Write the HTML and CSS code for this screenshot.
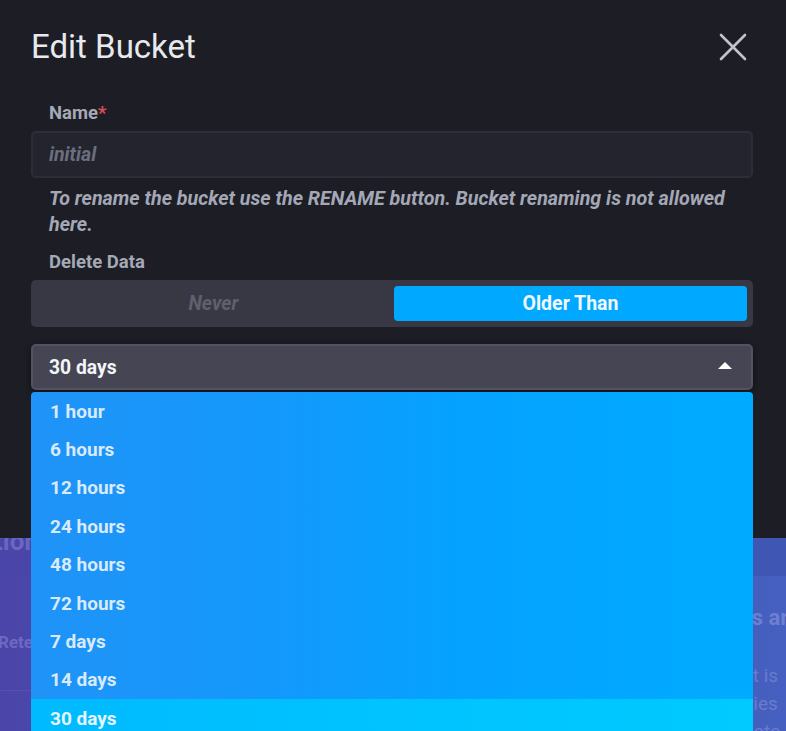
FILE: index.html
```html
<!DOCTYPE html>
<html>
<head>
<meta charset="utf-8">
<link rel="stylesheet" href="styles.css">
</head>
<body>
<div class="page">
  <div class="bg-header">
    <div class="bg-left bg-left-end"><span class="bg-title">Retention</span></div>
    <div class="bg-mid"></div>
    <div class="bg-right"></div>
  </div>
  <div class="bg-body">
    <div class="bg-left">
      <div class="bg-row-left">Retention</div>
    </div>
    <div class="bg-mid"></div>
    <div class="bg-right">
      <div class="bg-heading">Buckets are</div>
      <div class="bg-text t1">A bucket is</div>
      <div class="bg-text t2">series</div>
      <div class="bg-text t3">data</div>
    </div>
  </div>
</div>

<div class="modal">
  <div class="modal-header">
    <h1 class="modal-title">Edit Bucket</h1>
    <button class="close" aria-label="Close">
      <svg width="28" height="28" viewBox="0 0 28 28"><path d="M2 2 L26 26 M26 2 L2 26" stroke="#c0c3cc" stroke-width="2.6" stroke-linecap="round" fill="none"/></svg>
    </button>
  </div>
  <form class="form">
    <div class="label">Name<span class="req">*</span></div>
    <div class="input"><span class="placeholder">initial</span></div>
    <p class="help">To rename the bucket use the RENAME button. Bucket renaming is not allowed here.</p>
    <div class="label label-delete">Delete Data</div>
    <div class="toggle">
      <div class="toggle-btn">Never</div>
      <div class="toggle-btn active">Older Than</div>
    </div>
    <div class="select-wrap">
      <div class="select">
        <span class="select-value">30 days</span>
        <span class="caret"></span>
      </div>
      <ul class="menu">
        <li class="item">1 hour</li>
        <li class="item">6 hours</li>
        <li class="item">12 hours</li>
        <li class="item">24 hours</li>
        <li class="item">48 hours</li>
        <li class="item">72 hours</li>
        <li class="item">7 days</li>
        <li class="item">14 days</li>
        <li class="item selected">30 days</li>
      </ul>
    </div>
  </form>
</div>
</body>
</html>
```

FILE: styles.css
```css
* { box-sizing: border-box; }
html, body {
  margin: 0;
  padding: 0;
  width: 786px;
  height: 731px;
  overflow: hidden;
}
body {
  position: relative;
  font-family: Roboto, "Liberation Sans", sans-serif;
  background: linear-gradient(90deg, #4b45a9 0%, #4853b3 50%, #4560c0 100%);
}

/* background page (behind the modal) */
.page {
  padding-top: 538px;
}
.bg-header {
  display: flex;
  height: 38px;
}
.bg-header .bg-right { background: #3f56b5; }
.bg-header .bg-left { background: #4a45a8; }
.bg-body {
  display: flex;
  height: 155px;
}
.bg-left {
  width: 31px;
  overflow: hidden;
  display: flex;
  flex-direction: column;
  align-items: flex-start;
}
.bg-left-end { align-items: flex-end; }
.bg-mid { flex: 1; }
.bg-right {
  width: 33px;
  overflow: hidden;
}
.bg-title {
  font-size: 26px;
  font-weight: 700;
  color: #6b66c0;
  line-height: 26px;
  margin-top: -10px;
  margin-right: -8px;
  white-space: nowrap;
}
.bg-row-left {
  margin-top: 56px;
  margin-left: -2px;
  font-size: 17px;
  font-weight: 700;
  color: #6d68c0;
  white-space: nowrap;
  padding-bottom: 38px;
  border-bottom: 1px solid #5550b0;
  width: 80px;
}
.bg-right .bg-heading {
  margin-top: 28px;
  margin-left: -70px;
  font-size: 22px;
  font-weight: 700;
  line-height: 28px;
  color: #6e7fd0;
  white-space: nowrap;
}
.bg-right .bg-text {
  font-size: 19px;
  line-height: 28px;
  color: #6a7bcc;
  white-space: nowrap;
}
.bg-right .t1 { margin-top: 30px; margin-left: -68px; }
.bg-right .t2 { margin-left: -26px; }
.bg-right .t3 { margin-left: -10px; }

/* modal */
.modal {
  position: absolute;
  left: 0;
  top: 0;
  width: 786px;
  height: 538px;
  background: #1d1d25;
  padding: 0 33px 0 31px;
}
.modal-header {
  display: flex;
  align-items: center;
  justify-content: space-between;
  height: 94px;
}
.modal-title {
  margin: 0;
  font-size: 33px;
  font-weight: 400;
  color: #e8e9ed;
  line-height: 94px;
}
.close {
  background: none;
  border: 0;
  padding: 0;
  margin-right: 6px;
  width: 28px;
  height: 28px;
  display: block;
}
.close svg { display: block; }

.form { display: block; }
.label {
  font-size: 18.5px;
  font-weight: 700;
  color: #a5a9b6;
  padding-left: 18px;
  line-height: 22px;
  margin-top: 8px;
  margin-bottom: 17px;
}
.req { color: #dc4e58; }
.input {
  margin-top: -10px;
  height: 47px;
  background: #24242e;
  border: 2px solid #2c2d38;
  border-radius: 5px;
  padding-left: 16px;
  display: flex;
  align-items: center;
}
.placeholder {
  font-size: 19.5px;
  font-style: italic;
  font-weight: 700;
  color: #6c6f7e;
}
.help {
  margin: 8px 0 0 0;
  padding-left: 18px;
  padding-right: 8px;
  font-size: 19.7px;
  font-style: italic;
  font-weight: 700;
  line-height: 26px;
  color: #a4a8b6;
}
.label-delete {
  margin-top: 13px;
  margin-bottom: 7px;
}
.toggle {
  height: 47px;
  background: #383845;
  border-radius: 5px;
  padding: 6px;
  display: flex;
  gap: 4px;
}
.toggle-btn {
  flex: 1;
  display: flex;
  align-items: center;
  justify-content: center;
  border-radius: 4px;
  font-size: 19.5px;
  font-weight: 700;
  font-style: italic;
  color: #5d606e;
}
.toggle-btn.active {
  background: #00a9ff;
  color: #f2f8ff;
  font-style: normal;
}

.select-wrap {
  position: relative;
  margin-top: 17px;
}
.select {
  height: 46px;
  background: #454554;
  border: 2px solid #515263;
  border-radius: 5px;
  display: flex;
  align-items: center;
  justify-content: space-between;
  padding: 0 19px 0 16px;
  box-shadow: 0 2px 6px rgba(0,0,0,0.5);
}
.select-value {
  font-size: 19.3px;
  font-weight: 700;
  color: #f4f5f8;
}
.caret {
  width: 0;
  height: 0;
  border-left: 7px solid transparent;
  border-right: 7px solid transparent;
  border-bottom: 7px solid #ffffff;
  margin-top: -4px;
}
.menu {
  position: absolute;
  left: 0;
  right: 0;
  top: 48px;
  margin: 0;
  padding: 0;
  list-style: none;
  background: linear-gradient(90deg, #2093f7 0%, #1598fb 30%, #05a2ff 60%, #00abff 100%);
  border-radius: 4px 4px 0 0;
}
.item {
  height: 38.4px;
  display: flex;
  align-items: center;
  padding-left: 19px;
  font-size: 19px;
  font-weight: 700;
  color: #d9eafd;
}
.item.selected {
  background: linear-gradient(90deg, #00baff 0%, #00c3ff 50%, #00caff 100%);
  color: #e4f5ff;
}
```
